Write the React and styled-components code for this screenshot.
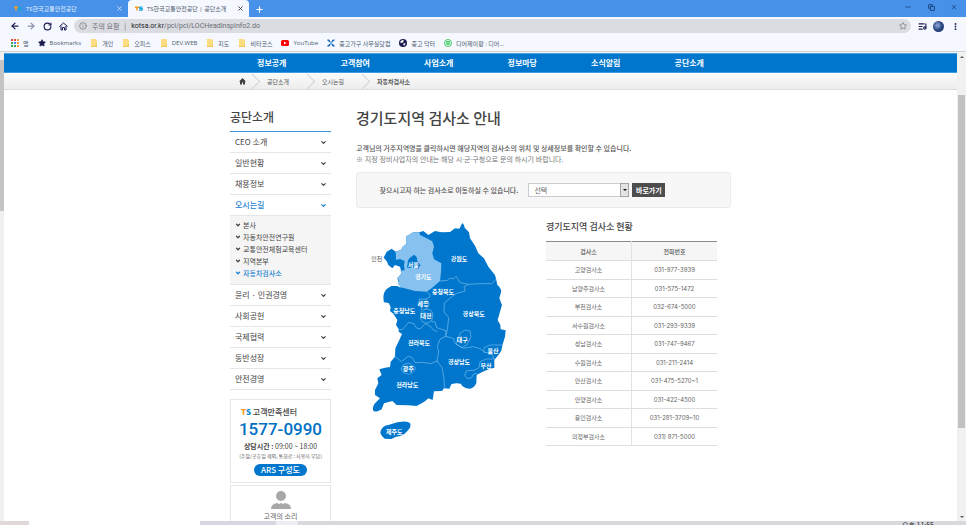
import React from 'react'
import styled, { createGlobalStyle } from 'styled-components'
import { ArrowLeft, ArrowRight, RotateCw, Info, Star, ListMusic, EllipsisVertical, ChevronDown, X, Plus, Minus, Copy } from 'lucide-react'

const sans = '"Open Sans", "Noto Sans CJK KR", sans-serif'
const kr = '"Noto Sans CJK KR", "Open Sans", sans-serif'

const bookmarks = [
    { icon: 'apps', text: '앱' },
    { icon: 'star', text: 'Bookmarks' },
    { icon: 'folder', text: '개인' },
    { icon: 'folder', text: '오피스' },
    { icon: 'folder', text: 'DEV.WEB' },
    { icon: 'folder', text: '지도' },
    { icon: 'folder', text: '비타코스' },
    { icon: 'youtube', text: 'YouTube' },
    { icon: 'cross', text: '중고가구 사무실닷컴' },
    { icon: 'globe', text: '중고 닥터' },
    { icon: 'face', text: '디어제이팡 : 디어...' },
]

const navItems = ['정보공개', '고객참여', '사업소개', '정보마당', '소식알림', '공단소개']

const sideMenu = [
    { text: 'CEO 소개' },
    { text: '일반현황' },
    { text: '채용정보' },
    { text: '오시는길', active: true, children: ['본사', '자동차안전연구원', '교통안전체험교육센터', '지역본부', '자동차검사소'] },
    { text: '윤리 · 인권경영' },
    { text: '사회공헌' },
    { text: '국제협력' },
    { text: '동반성장' },
    { text: '안전경영' },
]

const offices = [
    ['고양검사소', '031-977-3939'],
    ['남양주검사소', '031-575-1472'],
    ['부천검사소', '032-674-5000'],
    ['서수원검사소', '031-293-9339'],
    ['성남검사소', '031-747-9467'],
    ['수원검사소', '031-211-2414'],
    ['안산검사소', '031-475-5270~1'],
    ['안양검사소', '031-422-4500'],
    ['용인검사소', '031-281-3709~10'],
    ['의정부검사소', '031) 871-5000'],
]

const regions = [
    ['강원도', 297, 131],
    ['서울', 160, 147],
    ['경기도', 190, 183],
    ['충청북도', 249, 229],
    ['세종', 189, 266],
    ['대전', 198, 301],
    ['충청남도', 133, 285],
    ['경상북도', 341, 296],
    ['대구', 307, 372],
    ['전라북도', 177, 383],
    ['울산', 399, 406],
    ['경상남도', 297, 438],
    ['부산', 378, 452],
    ['광주', 145, 459],
    ['전라남도', 142, 508],
    ['제주도', 103, 648],
]

const TsMark = () => (
    <svg width="8" height="5" viewBox="0 0 16 10">
        <path d="M0 1h8v3H5.5v5H2.5V4H0z" fill="#f59a23" />
        <path d="M15 2h-4q-2 0-2 1.5T11 5h2q2 0 2 1.5T13 8H8" fill="none" stroke="#1aa3d8" strokeWidth="2.5" />
    </svg>
)

const BookmarkIcon = ({ type }) => {
    if (type === 'apps') {
        const colors = ['#e04b3a', '#e04b3a', '#f0a030', '#35a853', '#4285f4', '#f0a030', '#35a853', '#35a853', '#f0a030']
        return (
            <svg width="8" height="8" viewBox="0 0 8 8">
                {colors.map((c, i) => <rect key={i} x={(i % 3) * 3} y={Math.floor(i / 3) * 3} width="2" height="2" fill={c} />)}
            </svg>
        )
    }
    if (type === 'star') return <Star size={8} fill="#1d1a50" stroke="#1d1a50" />
    if (type === 'folder') {
        return (
            <svg width="8" height="8" viewBox="0 0 8 8">
                <path d="M1 0h5l1 1v7H1z" fill="#fbdc80" />
                <path d="M6 5h1v3H1V7h5z" fill="#eec75e" />
            </svg>
        )
    }
    if (type === 'youtube') {
        return (
            <svg width="8" height="8" viewBox="0 0 16 16">
                <rect y="2" width="16" height="12" rx="3" fill="#f00" />
                <path d="M6 5l5 3-5 3z" fill="#fff" />
            </svg>
        )
    }
    if (type === 'cross') {
        return (
            <svg width="8" height="8" viewBox="0 0 16 16" fill="none" stroke="#1c64b0" strokeWidth="3">
                <path d="M1 2q3 0 5 4M15 2q-4 0-5 4M1 14q4 0 5-4M15 14q-4 0-5-4" />
                <circle cx="8" cy="8" r="1" stroke="#5fb3e6" />
            </svg>
        )
    }
    if (type === 'globe') {
        return (
            <svg width="8" height="8" viewBox="0 0 16 16">
                <circle cx="8" cy="8" r="8" fill="#1d1a50" />
                <path d="M6 2l4 1-2 4-4 1-2-2zM10 8l3 1-2 4-3-1z" fill="#f5f8fe" />
            </svg>
        )
    }
    return (
        <svg width="8" height="8" viewBox="0 0 16 16" fill="none" stroke="#3ccb62" strokeWidth="2">
            <circle cx="8" cy="8" r="7" />
            <path d="M4 6h8M5 10h6M6 4v8M10 4v8" />
        </svg>
    )
}

const KoreaMap = () => (
    <MapSvg viewBox="24 15 426 666" role="img" aria-label="지역 지도">
        {/* mainland */}
        <path
            fill="#0077cd"
            d="M307 24Q314 30 314 38L327 52L330 70L345 92L355 115L372 130L385 155L405 180L409 195L412 210Q426 222 423 232L418 250L426 270L420 290L413 315L421 330L422 343L437 346L435 365L428 388L424 407L415 420L403 435L403 458L388 462L368 470L350 480L349 505Q340 522 328 521Q310 520 302 506Q288 502 274 508L268 521L252 520L246 528L222 529L218 555L205 550L197 557L185 565L170 573L145 571L110 570L97 558L72 565L65 583Q48 594 40 587Q36 576 45 565L60 550L45 540L45 525L55 505L52 490L65 480L58 463L75 458L90 456L92 440L105 425L106 400L118 375L126 357L116 350L116 342L108 330L112 315L100 296L90 288L92 276L86 264L72 262Q66 236 80 222L94 213L112 213L122 218L112 190L125 175L120 155L105 150L97 160L85 150L80 138L71 128L80 110L95 101L107 110L122 105L140 85L138 65L160 52L178 52L190 48L205 60L225 48L245 52L270 51L285 40L298 41Z"
        />
        <path
            fill="#86c1f0"
            d="M178 52L180 60L200 70L217 79L222 95L217 115L222 133L244 145L243 170L240 198L215 220L200 230L165 228L122 217L113 206L118 198L112 188L125 176L121 168L134 165L132 150L134 138L120 132L108 135L107 111L122 105L128 94L141 85L137 72L140 62L160 52Z"
        />
        <path fill="#0077cd" d="M141 158L144 136L150 128L162 119L170 126L172 138L181 150L175 162L158 158Z" />
        <path fill="#0077cd" d="M62 648Q68 632 85 630L112 622Q142 616 150 624Q156 636 140 650Q128 664 108 665L94 672L74 671Q58 658 62 648Z" />
        <g fill="none" stroke="#79bdec" strokeWidth="2" strokeLinejoin="round">
            <path d="M240 198L262 196L270 189L280 192L288 184L300 203L325 208L360 206L395 206L408 193" />
            <path d="M325 208L312 215L316 228L290 235L272 248L253 264L252 290L266 308L262 345L257 362" />
            <path d="M200 230Q214 238 208 247L196 253L178 252L180 262L174 270L186 278L184 285M196 253Q212 262 204 276L194 284" />
            <path d="M200 282Q218 284 218 298Q220 318 204 324Q182 326 181 304Q182 284 200 282Z" />
            <path d="M214 318L226 322L230 338L258 347" />
            <path d="M114 345L128 343L146 322L162 326L168 338L180 342L196 326L212 335L220 345L232 350" />
            <path d="M103 423L125 440L145 423L156 428L166 443L190 442L212 446L232 438" />
            <path d="M257 345L258 364L240 372L232 395L236 410L231 438L246 458L252 490L253 520" />
            <path d="M258 364L280 370L286 386L310 400L340 395L362 402L374 412" />
            <path d="M426 390L390 390L372 398L372 412L394 414L404 434" />
            <path d="M403 432L380 432L360 440L357 458L342 466L320 467L314 480L322 491L335 488L340 478L352 475" />
            <path d="M300 355L315 345L330 348L333 365L320 390L305 398L288 386L294 374Z" />
            <path d="M123 462L130 449L146 444L158 452L168 460L158 472L146 478L130 473Z" />
        </g>
        <MapLabel x="50" y="131" $dark>인천</MapLabel>
        {regions.map(([name, x, y]) => <MapLabel key={name} x={x} y={y}>{name}</MapLabel>)}
    </MapSvg>
)

const BrowserTab = ({ title, active }) => (
    <Tab $active={active}>
        <TsMark />
        <TabTitle>{title}</TabTitle>
        <IconButton aria-label="탭 닫기" $color={active ? '#333a48' : '#d3e4fa'}><X size={7} strokeWidth={3} /></IconButton>
    </Tab>
)

export default function App() {
    return (
        <Window>
            <GlobalStyle />
            <TabBar>
                <BrowserTab title="TS한국교통안전공단" />
                <BrowserTab title="TS한국교통안전공단 | 공단소개" active />
                <NewTab aria-label="새 탭"><Plus size={9} strokeWidth={3} /></NewTab>
                <WindowControls>
                    <IconButton aria-label="최소화" $color="#163a70"><Minus size={8} /></IconButton>
                    <IconButton aria-label="복원" $color="#163a70"><Copy size={7} strokeWidth={3} /></IconButton>
                    <IconButton aria-label="닫기" $color="#163a70"><X size={8} /></IconButton>
                </WindowControls>
            </TabBar>
            <Toolbar>
                <IconButton aria-label="뒤로" $color="#1d1a50"><ArrowLeft size={10} strokeWidth={3} /></IconButton>
                <IconButton aria-label="앞으로" $color="#8d90a8"><ArrowRight size={10} strokeWidth={3} /></IconButton>
                <IconButton aria-label="새로고침" $color="#1d1a50"><RotateCw size={9} strokeWidth={3} /></IconButton>
                <IconButton aria-label="홈" $color="#1d1a50">
                    <svg width="9" height="9" viewBox="0 0 18 18" fill="none" stroke="currentColor" strokeWidth="2">
                        <path d="M1 9l8-7 8 7M4 8v8h3v-5h4v5h3V8" />
                    </svg>
                </IconButton>
                <AddressBar>
                    <Info size={8} />
                    <span>주의 요함</span>
                    <span>|</span>
                    <Url><b>kotsa.or.kr</b>/pci/pci/LOCHeadInspInfo2.do</Url>
                    <Star size={8} />
                </AddressBar>
                <IconButton aria-label="재생목록" $color="#1d1a50"><ListMusic size={9} strokeWidth={3} /></IconButton>
                <Avatar aria-label="프로필" />
                <IconButton aria-label="메뉴" $color="#1d1a50"><EllipsisVertical size={9} strokeWidth={3} /></IconButton>
            </Toolbar>
            <BookmarkBar>
                {bookmarks.map(({ icon, text }) => (
                    <Bookmark key={text} href="#"><BookmarkIcon type={icon} />{text}</Bookmark>
                ))}
            </BookmarkBar>
            <Viewport>
                <LeftEdge />
                <Page>
                    <Nav>
                        <NavInner>
                            {navItems.map((t) => <NavLink key={t} href="#">{t}</NavLink>)}
                        </NavInner>
                    </Nav>
                    <Breadcrumb>
                        <BreadcrumbInner>
                            <Crumb href="#" aria-label="홈" $home>
                                <svg width="7" height="7" viewBox="0 0 14 14" fill="#444">
                                    <path d="M7 0l7 7h-2v6H8V9H6v4H2V7H0z" />
                                </svg>
                            </Crumb>
                            <CrumbArrow />
                            <Crumb href="#">공단소개</Crumb>
                            <CrumbArrow />
                            <Crumb href="#">오시는길</Crumb>
                            <CrumbArrow />
                            <Crumb href="#" $current>자동차검사소</Crumb>
                        </BreadcrumbInner>
                    </Breadcrumb>
                    <Body>
                        <Sidebar>
                            <SideTitle>공단소개</SideTitle>
                            {sideMenu.map(({ text, active, children }) => (
                                <React.Fragment key={text}>
                                    <SideLink href="#" $active={active}>{text}<ChevronDown size={7} strokeWidth={4} /></SideLink>
                                    {children && (
                                        <SubMenu>
                                            {children.map((c, i) => (
                                                <SubLink key={c} href="#" $active={i === 4}><ChevronDown size={6} strokeWidth={5} />{c}</SubLink>
                                            ))}
                                        </SubMenu>
                                    )}
                                </React.Fragment>
                            ))}
                            <CallCard>
                                <CallTitle><i>T</i><em>S</em> 고객만족센터</CallTitle>
                                <CallNumber>1577-0990</CallNumber>
                                <CallTime><b>상담시간 :</b> 09:00 ~ 18:00</CallTime>
                                <CallNote>(주말/공휴일 제외, 통화료 : 사용자 부담)</CallNote>
                                <ArsButton>ARS 구성도</ArsButton>
                            </CallCard>
                            <VoiceCard href="#">
                                <svg width="20" height="18" viewBox="0 0 20 18" fill="#a8a8a8">
                                    <circle cx="10" cy="5" r="5" />
                                    <path d="M0 18q0-5 6-6l2 1 2-1 2 1 2-1q6 1 6 6z" />
                                </svg>
                                고객의 소리
                            </VoiceCard>
                        </Sidebar>
                        <Main>
                            <Title>경기도지역 검사소 안내</Title>
                            <Lead>고객님의 거주지역명을 클릭하시면 해당지역의 검사소의 위치 및 상세정보를 확인할 수 있습니다.</Lead>
                            <Note>※ 지정 정비사업자의 안내는 해당 시·군·구청으로 문의 하시기 바랍니다.</Note>
                            <SearchBox>
                                <label htmlFor="office">찾으시고자 하는 검사소로 이동하실 수 있습니다.</label>
                                <SelectWrap>
                                    <Select id="office"><option>선택</option></Select>
                                    <SelectArrow />
                                </SelectWrap>
                                <GoButton>바로가기</GoButton>
                            </SearchBox>
                            <Columns>
                                <KoreaMap />
                                <OfficeList>
                                    <SubTitle>경기도지역 검사소 현황</SubTitle>
                                    <Table>
                                        <thead>
                                            <tr><th>검사소</th><th>전화번호</th></tr>
                                        </thead>
                                        <tbody>
                                            {offices.map(([name, tel]) => <tr key={name}><td>{name}</td><td>{tel}</td></tr>)}
                                        </tbody>
                                    </Table>
                                </OfficeList>
                            </Columns>
                        </Main>
                    </Body>
                </Page>
                <ScrollBar>
                    <Caret $up />
                    <Thumb />
                    <Caret />
                </ScrollBar>
            </Viewport>
            <TaskBar>
                <TaskPart $w={29} $color="#e1d9d7" />
                <TaskPart $w={171} $color="#ffffff" />
                <TaskPart $w={76} $color="#d6d7e1" />
                <TaskPart $w={22} $color="#eceef4" />
                <Clock>오후 11:55</Clock>
            </TaskBar>
        </Window>
    )
}

const GlobalStyle = createGlobalStyle`
* {
    box-sizing: border-box;
}
body {
    margin: 0;
    overflow: hidden;
    background: #fff;
    font-family: ${kr};
}
a {
    color: inherit;
    text-decoration: none;
}
button, select {
    font-family: inherit;
    border: 0;
    padding: 0;
}
svg {
    flex: none;
}
`
const Window = styled.div`
height: 100vh;
display: flex;
flex-direction: column;
`
const TabBar = styled.div`
display: flex;
height: 17px;
padding-left: 7px;
background: #4791e8;
`
const Tab = styled.div`
display: flex;
align-items: center;
gap: 4px;
width: 121px;
padding: 0 4px 0 7px;
font-family: ${sans};
font-size: 6px;
color: ${({ $active }) => ($active ? '#4b5568' : '#e6f0fd')};
background: ${({ $active }) => ($active ? '#f5f8fe' : 'transparent')};
border-radius: 4px 4px 0 0;
`
const TabTitle = styled.span`
flex: 1;
white-space: nowrap;
`
const IconButton = styled.button`
display: flex;
align-items: center;
justify-content: center;
width: 10px;
height: 14px;
background: none;
color: ${({ $color }) => $color};
`
const NewTab = styled(IconButton)`
margin: 2px 0 0 5px;
color: #fff;
`
const WindowControls = styled.div`
display: flex;
gap: 13px;
margin-left: auto;
padding-right: 7px;
`
const Toolbar = styled.div`
display: flex;
align-items: center;
gap: 6px;
height: 18px;
padding: 0 6px 0 10px;
background: #f5f8fe;
`
const AddressBar = styled.div`
flex: 1;
display: flex;
align-items: center;
gap: 5px;
height: 14px;
padding: 0 4px 0 5px;
border-radius: 7px;
background: #dadce1;
color: #6a6d74;
font-size: 7px;
`
const Url = styled.span`
flex: 1;
font-family: Roboto, sans-serif;
b {
    font-weight: 400;
    color: #23262c;
}
`
const Avatar = styled.button`
width: 11px;
height: 11px;
border-radius: 50%;
background: radial-gradient(circle at 40% 40%, #7f9ccc 10%, #2b4580 50%, #1f3468);
`
const BookmarkBar = styled.div`
display: flex;
align-items: center;
gap: 9px;
height: 17px;
padding: 0 11px;
background: #f5f8fe;
border-bottom: 1px solid #d0d3da;
`
const Bookmark = styled.a`
display: flex;
align-items: center;
gap: 4px;
font-family: ${sans};
font-size: 6px;
color: #4c5b70;
white-space: nowrap;
`
const Viewport = styled.div`
flex: 1;
min-height: 0;
display: flex;
border-top: 1px solid #f3f3f3;
`
const LeftEdge = styled.div`
width: 4px;
background: linear-gradient(#f0f0f0 7px, #c4c4c4 7px, #c4c4c4 158px, #f0f0f0 158px);
`
const Page = styled.div`
flex: 1;
overflow: hidden;
`
const Nav = styled.nav`
background: #0077cd;
border-top: 1px solid #4ba3e3;
border-bottom: 1px solid #3d9ce0;
`
const NavInner = styled.div`
max-width: 501px;
margin: 0 auto;
display: grid;
grid-template-columns: repeat(6, 1fr);
`
const NavLink = styled.a`
font-size: 8px;
font-weight: 700;
line-height: 18px;
text-align: center;
color: #fff;
`
const Breadcrumb = styled.div`
background: linear-gradient(#fbfbfb, #ededed);
border-bottom: 1px solid #dcdcdc;
`
const BreadcrumbInner = styled.div`
max-width: 501px;
margin: 0 auto;
display: flex;
align-items: center;
height: 16px;
overflow: hidden;
`
const Crumb = styled.a`
display: flex;
width: ${({ $home, $current }) => ($home ? '14px' : $current ? 'auto' : '41px')};
margin-left: 9px;
font-size: 6px;
color: #555;
font-weight: ${({ $current }) => ($current ? 700 : 400)};
`
const CrumbArrow = styled.span`
flex: none;
width: 11px;
height: 11px;
margin-left: -6px;
border: solid #d4d4d4;
border-width: 1px 1px 0 0;
transform: rotate(45deg);
`
const Body = styled.div`
max-width: 501px;
margin: 0 auto;
display: flex;
gap: 25px;
`
const Sidebar = styled.aside`
width: 101px;
padding-top: 18px;
`
const SideTitle = styled.h2`
margin: 0;
padding-bottom: 5px;
font-size: 12px;
font-weight: 500;
line-height: 18px;
color: #444;
border-bottom: 1px solid #3b93db;
`
const SideLink = styled.a`
display: flex;
align-items: center;
justify-content: space-between;
padding: 0 4px 0 5px;
font-size: 8px;
font-weight: ${({ $active }) => ($active ? 500 : 400)};
line-height: 20px;
color: ${({ $active }) => ($active ? '#1b82d2' : '#444')};
border-bottom: 1px solid #e6e6e6;
`
const SubMenu = styled.div`
padding: 3px 5px 5px;
background: #f5f5f5;
border-bottom: 1px solid #e6e6e6;
`
const SubLink = styled.a`
display: flex;
align-items: center;
gap: 2px;
font-size: 7px;
font-weight: ${({ $active }) => ($active ? 500 : 400)};
line-height: 12px;
white-space: nowrap;
color: ${({ $active }) => ($active ? '#1b82d2' : '#444')};
`
const CallCard = styled.div`
display: flex;
flex-direction: column;
align-items: center;
margin-top: 9px;
padding: 6px 0;
border: 1px solid #e6e6e6;
white-space: nowrap;
color: #444;
`
const CallTitle = styled.div`
align-self: flex-start;
padding-left: 10px;
font-size: 8px;
font-weight: 500;
line-height: 12px;
i, em {
    font-style: normal;
    font-weight: 900;
    color: #f59a23;
}
em {
    color: #0c8fd0;
}
`
const CallNumber = styled.div`
font-family: Roboto, sans-serif;
font-size: 17px;
font-weight: 500;
line-height: 23px;
color: #0070c4;
`
const CallTime = styled.div`
font-size: 7px;
line-height: 10px;
`
const CallNote = styled.div`
font-size: 5px;
line-height: 10px;
color: #666;
`
const ArsButton = styled.button`
width: 53px;
margin-top: 3px;
border-radius: 6px;
font-size: 8px;
font-weight: 500;
line-height: 12px;
color: #fff;
background: #0077cd;
`
const VoiceCard = styled.a`
display: flex;
flex-direction: column;
align-items: center;
gap: 1px;
margin-top: 2px;
padding: 5px 0;
border: 1px solid #e6e6e6;
font-size: 7px;
line-height: 12px;
color: #666;
`
const Main = styled.main`
flex: 1;
min-width: 0;
padding-top: 17px;
`
const Title = styled.h1`
margin: 0 0 13px;
font-size: 15px;
font-weight: 500;
line-height: 22px;
color: #444;
`
const Lead = styled.p`
margin: 0;
font-size: 7px;
font-weight: 500;
line-height: 12px;
color: #555;
`
const Note = styled.p`
margin: 0 0 6px;
font-family: ${sans};
font-size: 7px;
line-height: 12px;
color: #777;
`
const SearchBox = styled.div`
display: flex;
align-items: center;
justify-content: center;
gap: 3px;
height: 36px;
padding-right: 42px;
font-size: 7px;
font-weight: 500;
color: #555;
background: #f7f7f7;
border: 1px solid #ebebeb;
border-radius: 3px;
label {
    padding-right: 7px;
}
`
const SelectWrap = styled.div`
position: relative;
width: 101px;
height: 14px;
`
const Select = styled.select`
appearance: none;
width: 100%;
height: 100%;
padding-left: 5px;
font-size: 7px;
color: #666;
background: #fff;
border: 1px solid #ccc;
`
const SelectArrow = styled.span`
position: absolute;
top: 0;
right: 0;
width: 9px;
height: 14px;
background: #e3e3e3;
border: 1px solid #a5a5a5;
pointer-events: none;
&::after {
    content: '';
    position: absolute;
    top: 5px;
    left: 2px;
    border: solid transparent;
    border-width: 2px 2px 0;
    border-top-color: #111;
}
`
const GoButton = styled.button`
width: 33px;
height: 14px;
font-size: 7px;
font-weight: 700;
color: #fff;
background: #4d4d4d;
`
const Columns = styled.div`
display: flex;
justify-content: space-between;
padding: 12px 14px 0 12px;
`
const MapSvg = styled.svg`
width: 142px;
height: 222px;
`
const MapLabel = styled.text`
font-size: 18px;
font-weight: ${({ $dark }) => ($dark ? 400 : 700)};
text-anchor: middle;
dominant-baseline: central;
fill: ${({ $dark }) => ($dark ? '#555' : '#fff')};
`
const OfficeList = styled.section`
width: 171px;
`
const SubTitle = styled.h3`
margin: 0 0 7px;
font-size: 9px;
font-weight: 500;
line-height: 14px;
color: #444;
`
const Table = styled.table`
width: 100%;
height: 205px;
border-collapse: collapse;
table-layout: fixed;
font-family: Inter, ${kr};
font-size: 6px;
color: #666;
border-top: 1px solid #8c8c8c;
th, td {
    padding: 0;
    font-weight: 400;
    text-align: center;
    border-bottom: 1px solid #dedede;
}
th {
    height: 19px;
    font-weight: 500;
    color: #555;
    background: #f6f6f6;
}
th + th, td + td {
    border-left: 1px solid #e3e3e3;
}
`
const ScrollBar = styled.div`
display: flex;
flex-direction: column;
align-items: center;
width: 9px;
padding: 3px 0;
background: #f1f1f1;
`
const Caret = styled.span`
border: solid transparent;
border-width: ${({ $up }) => ($up ? '0 2px 2px' : '2px 2px 0')};
border-${({ $up }) => ($up ? 'bottom' : 'top')}-color: #555;
`
const Thumb = styled.div`
width: 7px;
height: 72%;
margin: 37px 0 auto;
background: #c1c1c1;
`
const TaskBar = styled.div`
display: flex;
height: 4px;
overflow: hidden;
background: #d8d8df;
`
const TaskPart = styled.div`
width: ${({ $w }) => $w}px;
background: ${({ $color }) => $color};
`
const Clock = styled.div`
margin-left: auto;
padding-right: 32px;
font-size: 7px;
line-height: 9px;
color: #222;
`
